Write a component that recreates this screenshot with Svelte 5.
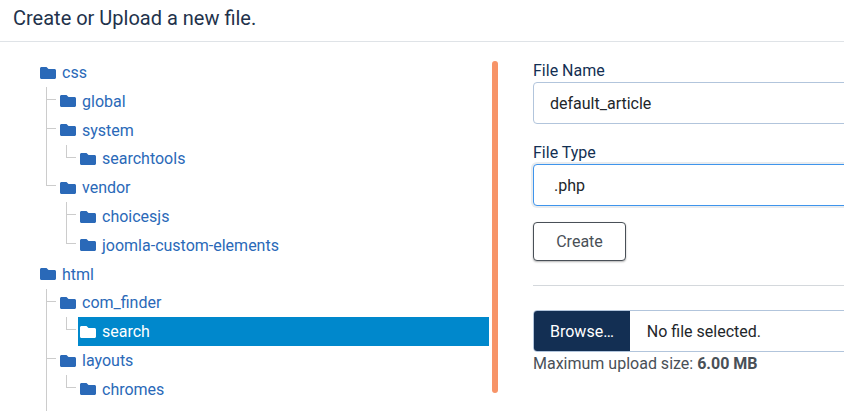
<script>
  const tree = [
    { name: 'css', children: [
      { name: 'global' },
      { name: 'system', children: [{ name: 'searchtools' }] },
      { name: 'vendor', children: [{ name: 'choicesjs' }, { name: 'joomla-custom-elements' }] }
    ] },
    { name: 'html', children: [
      { name: 'com_finder', children: [{ name: 'search', selected: true }] },
      // more siblings follow below the fold, so the line keeps running
      { name: 'layouts', more: true, children: [{ name: 'chromes' }] }
    ] }
  ];
</script>

{#snippet branch(items, top)}
  <ul class:top>
    {#each items as item}
      <li class:more={item.more}>
        <a href="#top" class="node" class:selected={item.selected}>
          <svg viewBox="0 0 512 512" aria-hidden="true">
            <path d="M464 128H272l-64-64H48C21.49 64 0 85.49 0 112v288c0 26.51 21.49 48 48 48h416c26.51 0 48-21.49 48-48V176c0-26.51-21.49-48-48-48z" />
          </svg>
          {item.name}
        </a>
        {#if item.children}
          {@render branch(item.children, false)}
        {/if}
      </li>
    {/each}
  </ul>
{/snippet}

<div class="page">
  <header>Create or Upload a new file.</header>
  <main>
    <nav class="tree">
      {@render branch(tree, true)}
    </nav>
    <div class="splitter"></div>
    <section class="forms">
      <label for="name">File Name</label>
      <input id="name" type="text" value="default_article" />
      <label for="type" class="second">File Type</label>
      <div id="type" class="select">.php</div>
      <button class="create">Create</button>
      <hr />
      <div class="file">
        <span class="browse">Browse…</span>
        <span class="none">No file selected.</span>
      </div>
      <p class="hint">Maximum upload size: <strong>6.00 MB</strong></p>
    </section>
  </main>
</div>

<style>
  :global(body) {
    margin: 0;
    background: #fff;
    font-family: Roboto, "Liberation Sans", sans-serif;
  }

  .page {
    width: 844px;
    height: 411px;
    overflow: hidden;
  }

  header {
    height: 36px;
    padding: 5px 13px 0;
    font-size: 20px;
    line-height: 27px;
    color: #22324b;
    border-bottom: 1px solid #dfe3e7;
  }

  main {
    display: grid;
    grid-template-columns: 492px 5px 400px;
    align-items: start;
  }

  .tree {
    height: 369px;
    overflow: hidden;
    padding: 16.2px 3px 0 0;
    box-sizing: border-box;
  }

  ul {
    list-style: none;
    margin: 0 0 0 20px;
    padding: 0;
  }

  ul.top {
    margin-left: 38px;
  }

  li {
    position: relative;
  }

  ul:not(.top) > li::before {
    content: "";
    position: absolute;
    left: -12px;
    top: 0;
    bottom: 0;
    width: 1px;
    background: #ccc;
  }

  ul:not(.top) > li:last-child::before {
    bottom: auto;
    height: 12px;
  }

  ul:not(.top) > li.more:last-child::before {
    bottom: -12px;
    height: auto;
  }

  ul:not(.top) > li::after {
    content: "";
    position: absolute;
    left: -12px;
    top: 12px;
    width: 10px;
    height: 1px;
    background: #ccc;
  }

  .node {
    display: flex;
    align-items: center;
    gap: 6px;
    height: 28.8px;
    padding-left: 2px;
    font-size: 16px;
    color: #2a69b8;
    text-decoration: none;
  }

  .node svg {
    width: 16px;
    height: 16px;
    fill: currentColor;
    flex: none;
  }

  .node.selected {
    background: #0088cc;
    color: #fff;
  }

  .splitter {
    height: 332px;
    margin-top: 19px;
    background: #f79468;
    border-radius: 3px;
    width: 6px;
  }

  .forms {
    padding: 17px 0 0 36px;
  }

  label {
    display: block;
    font-size: 16px;
    line-height: 23px;
    color: #132f53;
  }

  label.second {
    margin-top: 17px;
  }

  input, .select {
    display: block;
    width: 100%;
    height: 42px;
    box-sizing: border-box;
    padding: 0 16px;
    font: 16px Roboto, sans-serif;
    color: #22262a;
    background: #fff;
    border: 1px solid #b2c5dc;
    border-radius: 4px;
    outline: none;
  }

  .select {
    display: flex;
    align-items: center;
    padding-left: 20px;
    border-color: #3f95ec;
    box-shadow: 0 0 0 2px #e9ecef;
  }

  .create {
    display: block;
    margin-top: 16px;
    width: 93px;
    height: 39px;
    font: 16px Roboto, sans-serif;
    color: #495057;
    background: #fff;
    border: 1px solid #495057;
    border-radius: 4px;
    box-shadow: 0 1px 2px rgba(0, 0, 0, .3);
  }

  hr {
    margin: 24px 0 24px;
    border: 0;
    border-top: 1px solid #d4d8dc;
  }

  .file {
    display: flex;
    align-items: center;
    height: 42px;
    box-sizing: border-box;
    border: 1px solid #b2c5dc;
    border-radius: 4px;
    overflow: hidden;
    font-size: 16px;
  }

  .browse {
    display: flex;
    align-items: center;
    height: 100%;
    padding: 0 16px;
    background: #132f53;
    color: #fff;
  }

  .none {
    padding-left: 17px;
    color: #22262a;
  }

  .hint {
    margin: 0;
    font-size: 16px;
    line-height: 24px;
    color: #495057;
  }
</style>
